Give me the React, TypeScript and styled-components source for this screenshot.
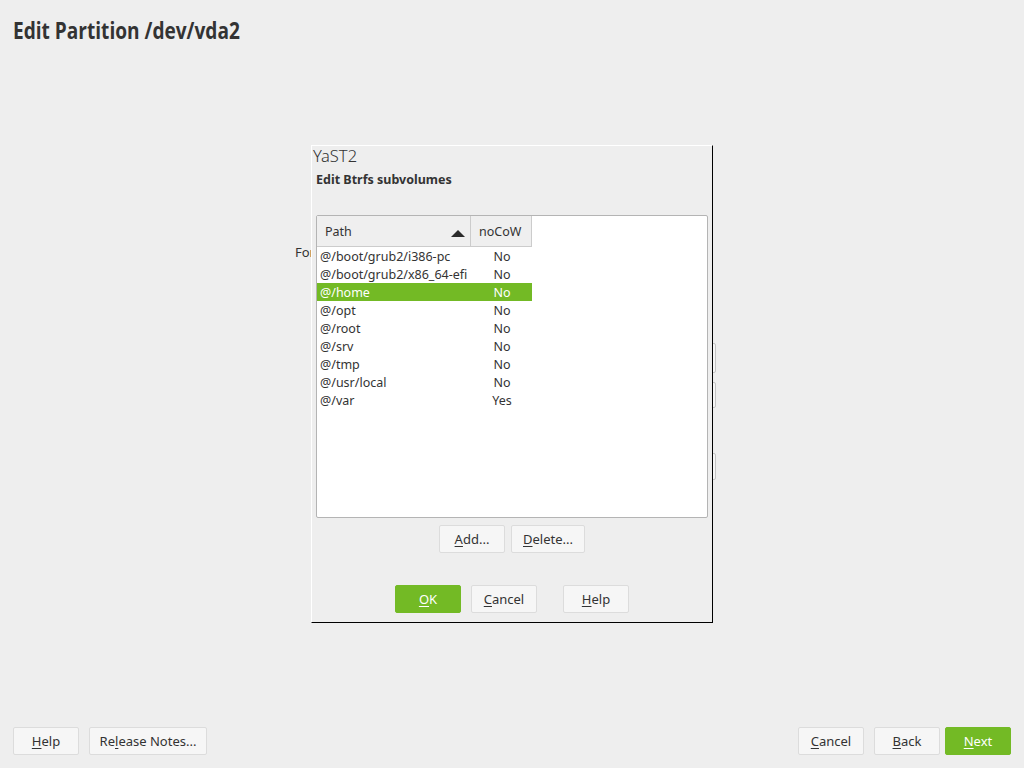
import styled, { createGlobalStyle } from 'styled-components';

const GlobalStyle = createGlobalStyle`
	html, body {
		margin: 0;
		padding: 0;
		background: #eeeeee;
	}
	body {
		font-family: 'Noto Sans', 'Open Sans', sans-serif;
		font-size: 13px;
		color: #333333;
	}
`;

const GREEN = '#73ba25';

type Row = { path: string; nocow: string };

const rows: Row[] = [
	{ path: '@/boot/grub2/i386-pc', nocow: 'No' },
	{ path: '@/boot/grub2/x86_64-efi', nocow: 'No' },
	{ path: '@/home', nocow: 'No' },
	{ path: '@/opt', nocow: 'No' },
	{ path: '@/root', nocow: 'No' },
	{ path: '@/srv', nocow: 'No' },
	{ path: '@/tmp', nocow: 'No' },
	{ path: '@/usr/local', nocow: 'No' },
	{ path: '@/var', nocow: 'Yes' },
];

const selected = 2;

function Label({ text, hot }: { text: string; hot: number }) {
	return (
		<>
			{text.slice(0, hot)}
			<Key>{text[hot]}</Key>
			{text.slice(hot + 1)}
		</>
	);
}

export default function App() {
	return (
		<Page>
			<GlobalStyle />
			<Title>Edit Partition /dev/vda2</Title>

			{/* the partition form, mostly hidden under the popup */}
			<Main>
				<FormatLabel>Format</FormatLabel>
				<SideButtons>
					<GhostButton $h={30} />
					<GhostButton $h={26} />
					<Spacer $h={27} />
					<GhostButton $h={27} />
				</SideButtons>
			</Main>

			<Footer>
				<ButtonGroup>
					<Button $w={66}>
						<Label text="Help" hot={0} />
					</Button>
					<Button $w={118}>
						<Label text="Release Notes..." hot={2} />
					</Button>
				</ButtonGroup>
				<ButtonGroup>
					<Button $w={66}>
						<Label text="Cancel" hot={0} />
					</Button>
					<Button $w={66}>
						<Label text="Back" hot={0} />
					</Button>
					<Button $w={66} $primary $gapLeft={-5}>
						<Label text="Next" hot={0} />
					</Button>
				</ButtonGroup>
			</Footer>

			<Dialog>
				<WindowTitle>YaST2</WindowTitle>
				<DialogBody>
					<Heading>Edit Btrfs subvolumes</Heading>
					<Table>
						<HeaderRow>
							<HeaderCell>
								Path
								<SortArrow viewBox="0 0 14 7">
									<polygon points="0,7 7,0 14,7" fill="#2b2b2b" />
								</SortArrow>
							</HeaderCell>
							<HeaderCell>noCoW</HeaderCell>
						</HeaderRow>
						{rows.map((r, i) => (
							<DataRow key={r.path} $selected={i === selected}>
								<PathCell>{r.path}</PathCell>
								<FlagCell>{r.nocow}</FlagCell>
							</DataRow>
						))}
					</Table>
					<TableActions>
						<Button $w={66} $h={28}>
							<Label text="Add..." hot={0} />
						</Button>
						<Button $w={74} $h={28}>
							<Label text="Delete..." hot={0} />
						</Button>
					</TableActions>
					<DialogActions>
						<Button $w={66} $h={28} $primary>
							<Label text="OK" hot={0} />
						</Button>
						<Button $w={66} $h={28}>
							<Label text="Cancel" hot={0} />
						</Button>
						<Button $w={66} $h={28} $gapLeft={16}>
							<Label text="Help" hot={0} />
						</Button>
					</DialogActions>
				</DialogBody>
			</Dialog>
		</Page>
	);
}

const Page = styled.div`
	position: relative;
	width: 1024px;
	height: 768px;
	display: flex;
	flex-direction: column;
	overflow: hidden;
`;

const Title = styled.h1`
	margin: 0;
	padding: 15px 13px 0;
	height: 30px;
	font-family: 'Open Sans', sans-serif;
	font-weight: 700;
	font-size: 24px;
	line-height: 30px;
	color: #333333;
	transform: scaleX(0.795);
	transform-origin: 13px 0;
	white-space: nowrap;
`;

const Main = styled.div`
	flex: 1;
	position: relative;
	display: flex;
	align-items: flex-start;
	padding-top: 200px;
	padding-left: 295px;
`;

const FormatLabel = styled.div`
	width: 16px;
	overflow: hidden;
	white-space: nowrap;
	font-size: 13px;
	line-height: 18px;
	margin-top: -2px;
`;

const SideButtons = styled.div`
	display: flex;
	flex-direction: column;
	gap: 9px;
	margin-left: 335px;
	margin-top: 98px;
`;

const GhostButton = styled.div<{ $h: number }>`
	width: 70px;
	height: ${(p) => p.$h}px;
	background: #f6f6f6;
	border: 1px solid #c4c4c4;
	border-radius: 2px;
	box-sizing: border-box;
`;

const Spacer = styled.div<{ $h: number }>`
	height: ${(p) => p.$h}px;
`;

const Footer = styled.div`
	display: flex;
	justify-content: space-between;
	align-items: center;
	padding: 0 13px 13px 13px;
`;

const ButtonGroup = styled.div`
	display: flex;
	gap: 10px;
`;

const Button = styled.button<{ $w: number; $h?: number; $primary?: boolean; $gapLeft?: number }>`
	width: ${(p) => p.$w}px;
	height: ${(p) => p.$h ?? 28}px;
	margin-left: ${(p) => p.$gapLeft ?? 0}px;
	box-sizing: border-box;
	border: 1px solid ${(p) => (p.$primary ? GREEN : '#dcdcdc')};
	border-radius: 2px;
	background: ${(p) => (p.$primary ? GREEN : '#f6f6f6')};
	color: ${(p) => (p.$primary ? '#ffffff' : '#333333')};
	font-family: 'Noto Sans', 'Open Sans', sans-serif;
	font-size: 13px;
	padding: 0;
	display: flex;
	align-items: center;
	justify-content: center;
	white-space: nowrap;
`;

const Key = styled.span`
	text-decoration: underline;
	text-underline-offset: 2px;
`;

const Dialog = styled.div`
	position: absolute;
	left: 311px;
	top: 145px;
	width: 402px;
	height: 478px;
	box-sizing: border-box;
	background: #eeeeee;
	border-top: 1px solid #ffffff;
	border-left: 1px solid #ffffff;
	border-right: 1px solid #000000;
	border-bottom: 1px solid #000000;
	display: flex;
	flex-direction: column;
`;

const WindowTitle = styled.div`
	padding-left: 1px;
	margin-top: 1px;
	font-size: 16.5px;
	font-weight: 300;
	line-height: 18px;
	color: #333333;
`;

const DialogBody = styled.div`
	display: flex;
	flex-direction: column;
	padding: 0 4px 0 4px;
`;

const Heading = styled.div`
	margin-top: 6px;
	font-size: 12.5px;
	font-weight: 700;
	line-height: 18px;
	height: 18px;
`;

const Table = styled.div`
	margin-top: 26px;
	height: 303px;
	box-sizing: border-box;
	background: #ffffff;
	border: 1px solid #b4b4b4;
	border-radius: 2px;
	display: flex;
	flex-direction: column;
	font-size: 12.5px;
`;

const HeaderRow = styled.div`
	display: grid;
	grid-template-columns: 154px 61px;
	height: 31px;
`;

const HeaderCell = styled.div`
	position: relative;
	display: flex;
	align-items: center;
	padding-left: 8px;
	background: #efefef;
	border-right: 1px solid #cccccc;
	border-bottom: 1px solid #cccccc;
`;

const SortArrow = styled.svg`
	position: absolute;
	right: 5px;
	top: 14px;
	width: 14px;
	height: 7px;
`;

const DataRow = styled.div<{ $selected: boolean }>`
	display: grid;
	grid-template-columns: 154px 61px;
	width: 215px;
	height: 18px;
	box-sizing: border-box;
	padding-top: 1px;
	line-height: 17px;
	background: ${(p) => (p.$selected ? GREEN : 'transparent')};
	color: ${(p) => (p.$selected ? '#ffffff' : '#333333')};
`;

const PathCell = styled.div`
	padding-left: 3px;
	white-space: nowrap;
`;

const FlagCell = styled.div`
	text-align: center;
	padding-left: 1px;
`;

const TableActions = styled.div`
	display: flex;
	justify-content: center;
	gap: 6px;
	margin-top: 7px;
`;

const DialogActions = styled.div`
	display: flex;
	justify-content: center;
	gap: 10px;
	margin-top: 32px;
`;
